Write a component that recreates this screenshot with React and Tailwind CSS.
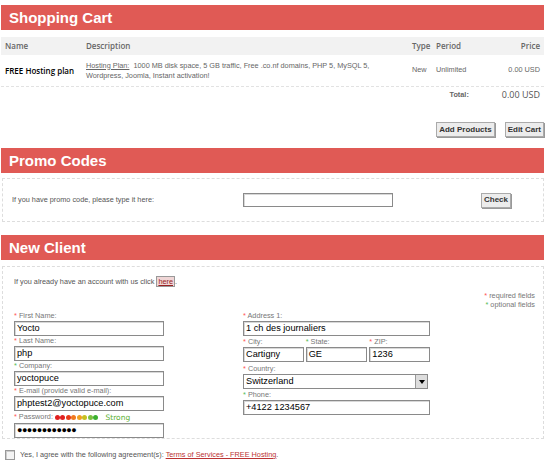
import React from "react";

const small = "font-['Liberation_Sans',Arial,sans-serif] text-[7.3px]";
const btn =
  "h-[15px] px-[2px] bg-[#ececec] border border-[#aaa] shadow-[1px_1px_0_#999] font-['Liberation_Sans',Arial,sans-serif] font-bold text-[8px] text-[#333]";

function Bar({ title, className = "" }) {
  return (
    <div
      className={
        "h-[25px] bg-[#e05a55] pl-[8px] text-white font-bold text-[15px] leading-[25px] font-['Liberation_Sans',Arial,sans-serif] " +
        className
      }
    >
      {title}
    </div>
  );
}

function Label({ text, req = true }) {
  return (
    <div className={small + " h-[10px] leading-[10px] text-[#777] whitespace-nowrap"}>
      <span className={req ? "text-[#f55]" : "text-[#5b5]"}>*</span> {text}
    </div>
  );
}

function Field({ value, w = "w-full" }) {
  return (
    <div
      className={
        w +
        " h-[15px] border border-[#8a8a8a] shadow-[inset_1px_1px_0_#d8d8d8] bg-white px-[2px] text-[9.2px] leading-[13px] text-black font-['Liberation_Sans',Arial,sans-serif] overflow-hidden whitespace-nowrap"
      }
    >
      {value}
    </div>
  );
}

const dots = ["#e02020", "#e02020", "#e83a18", "#f07a20", "#f0a020", "#c8c020", "#7cc040", "#3cb030"];

function App() {
  return (
    <div className="w-[550px] h-[470px] bg-white overflow-hidden">
      <div className="ml-[1px] w-[543px] pt-[5px]">
        <Bar title="Shopping Cart" />

        {/* cart table */}
        <div className="mt-[7px] h-[18px] bg-[#f2f2f2] grid grid-cols-[81px_326px_24px_1fr_auto] items-center pl-[4px] pr-[4px] font-['Open_Sans',sans-serif] font-semibold text-[8px] text-[#666]">
          <div>Name</div>
          <div>Description</div>
          <div>Type</div>
          <div>Period</div>
          <div>Price</div>
        </div>
        <div className="h-[32px] grid grid-cols-[81px_326px_24px_1fr_auto] items-center pl-[4px] pr-[4px] border-b border-dashed border-[#e2e2e2]">
          <div className="font-['Open_Sans',sans-serif] font-semibold text-[8px] text-black">FREE Hosting plan</div>
          <div className={small + " leading-[10px] text-[#666] whitespace-nowrap"}>
            <span className="underline">Hosting Plan:</span>&nbsp; 1000 MB disk space, 5 GB traffic, Free .co.nf domains, PHP 5, MySQL 5,
            <br />
            Wordpress, Joomla, Instant activation!
          </div>
          <div className={small + " text-[#666]"}>New</div>
          <div className={small + " text-[#666]"}>Unlimited</div>
          <div className={small + " text-[#666]"}>0.00 USD</div>
        </div>
        <div className="h-[16px] flex items-center justify-end pr-[4px]">
          <span className={small + " font-bold text-[#666] mr-[33px]"}>Total:</span>
          <span className="font-['Open_Sans',sans-serif] text-[9px] text-[#555]">0.00 USD</span>
        </div>

        <div className="mt-[19px] flex justify-end gap-[10px]">
          <button className={btn}>Add Products</button>
          <button className={btn}>Edit Cart</button>
        </div>

        <Bar title="Promo Codes" className="mt-[11px]" />
        <div className="mt-[5px] ml-[1px] h-[44px] border border-dashed border-[#ddd] flex items-center">
          <span className={small + " w-[240px] pl-[9px] text-[#555]"}>If you have promo code, please type it here:</span>
          <div className="w-[150px] h-[14px] border border-[#8a8a8a] shadow-[inset_1px_1px_0_#d8d8d8]"></div>
          <button className={btn + " ml-[88px]"}>Check</button>
        </div>

        <Bar title="New Client" className="mt-[13px]" />
        <div className="mt-[6px] ml-[1px] h-[173px] border border-dashed border-[#ddd] pl-[11px] pr-[8px]">
          <div className={small + " mt-[10px] text-[#555] h-[10px] leading-[10px]"}>
            If you already have an account with us click{" "}
            <span className="bg-[#f0d6d6] border border-[#999] underline text-[#922] px-[1px]">here</span>.
          </div>
          <div className={small + " mt-[4px] text-right text-[#777] leading-[9px]"}>
            <div><span className="text-[#f55]">*</span> required fields</div>
            <div><span className="text-[#5b5]">*</span> optional fields</div>
          </div>
          <div className="flex mt-[2px]">
            <div className="w-[150px] flex flex-col">
              <Label text="First Name:" />
              <Field value="Yocto" />
              <Label text="Last Name:" />
              <Field value="php" />
              <Label text="Company:" req={false} />
              <Field value="yoctopuce" />
              <Label text="E-mail (provide valid e-mail):" />
              <Field value="phptest2@yoctopuce.com" />
              <div className={small + " h-[11px] mt-[1px] flex items-center text-[#777]"}>
                <span className="text-[#f55]">*</span>&nbsp;Password:&nbsp;
                <span className="flex gap-[0.5px]">
                  {dots.map((c, i) => (
                    <span key={i} className="w-[5px] h-[5px] rounded-full" style={{ background: c }} />
                  ))}
                </span>
                <span className="ml-[7px] font-['DejaVu_Sans',sans-serif] text-[7.5px] text-[#5ab030]">Strong</span>
              </div>
              <Field value={<span className="text-[9px] tracking-[-0.5px]">●●●●●●●●●●●●</span>} />
            </div>
            <div className="ml-[79px] w-[187px] flex flex-col">
              <Label text="Address 1:" />
              <Field value="1 ch des journaliers" />
              <div className="flex gap-[2px] mt-[1px]">
                <div className="w-[62px]">
                  <Label text="City:" />
                  <Field value="Cartigny" />
                </div>
                <div className="w-[63px]">
                  <Label text="State:" req={false} />
                  <Field value="GE" />
                </div>
                <div className="w-[62px]">
                  <Label text="ZIP:" />
                  <Field value="1236" />
                </div>
              </div>
              <div className="mt-[2px]">
                <Label text="Country:" />
                <div className="w-[185px] h-[15px] border border-[#8a8a8a] bg-white flex items-center">
                  <span className="flex-1 px-[2px] text-[9.2px] leading-[13px] font-['Liberation_Sans',Arial,sans-serif]">Switzerland</span>
                  <span className="w-[12px] h-[13px] bg-[#ddd] border-l border-[#999] flex items-center justify-center">
                    <svg width="6" height="4" viewBox="0 0 6 4"><path d="M0 0h6L3 4z" fill="#000" /></svg>
                  </span>
                </div>
              </div>
              <div className="mt-[1px]">
                <Label text="Phone:" req={false} />
                <Field value="+4122 1234567" />
              </div>
            </div>
          </div>
        </div>

        <div className="mt-[11px] ml-[4px] flex items-center">
          <span className="w-[10px] h-[10px] border border-[#999] bg-[#f4f4f4] shadow-[inset_1px_1px_0_#ccc]"></span>
          <span className={small + " ml-[5px] text-[#555]"}>
            Yes, I agree with the following agreement(s):{" "}
            <span className="underline text-[#b33]">Terms of Services - FREE Hosting</span>.
          </span>
        </div>
      </div>
    </div>
  );
}

export default App;
